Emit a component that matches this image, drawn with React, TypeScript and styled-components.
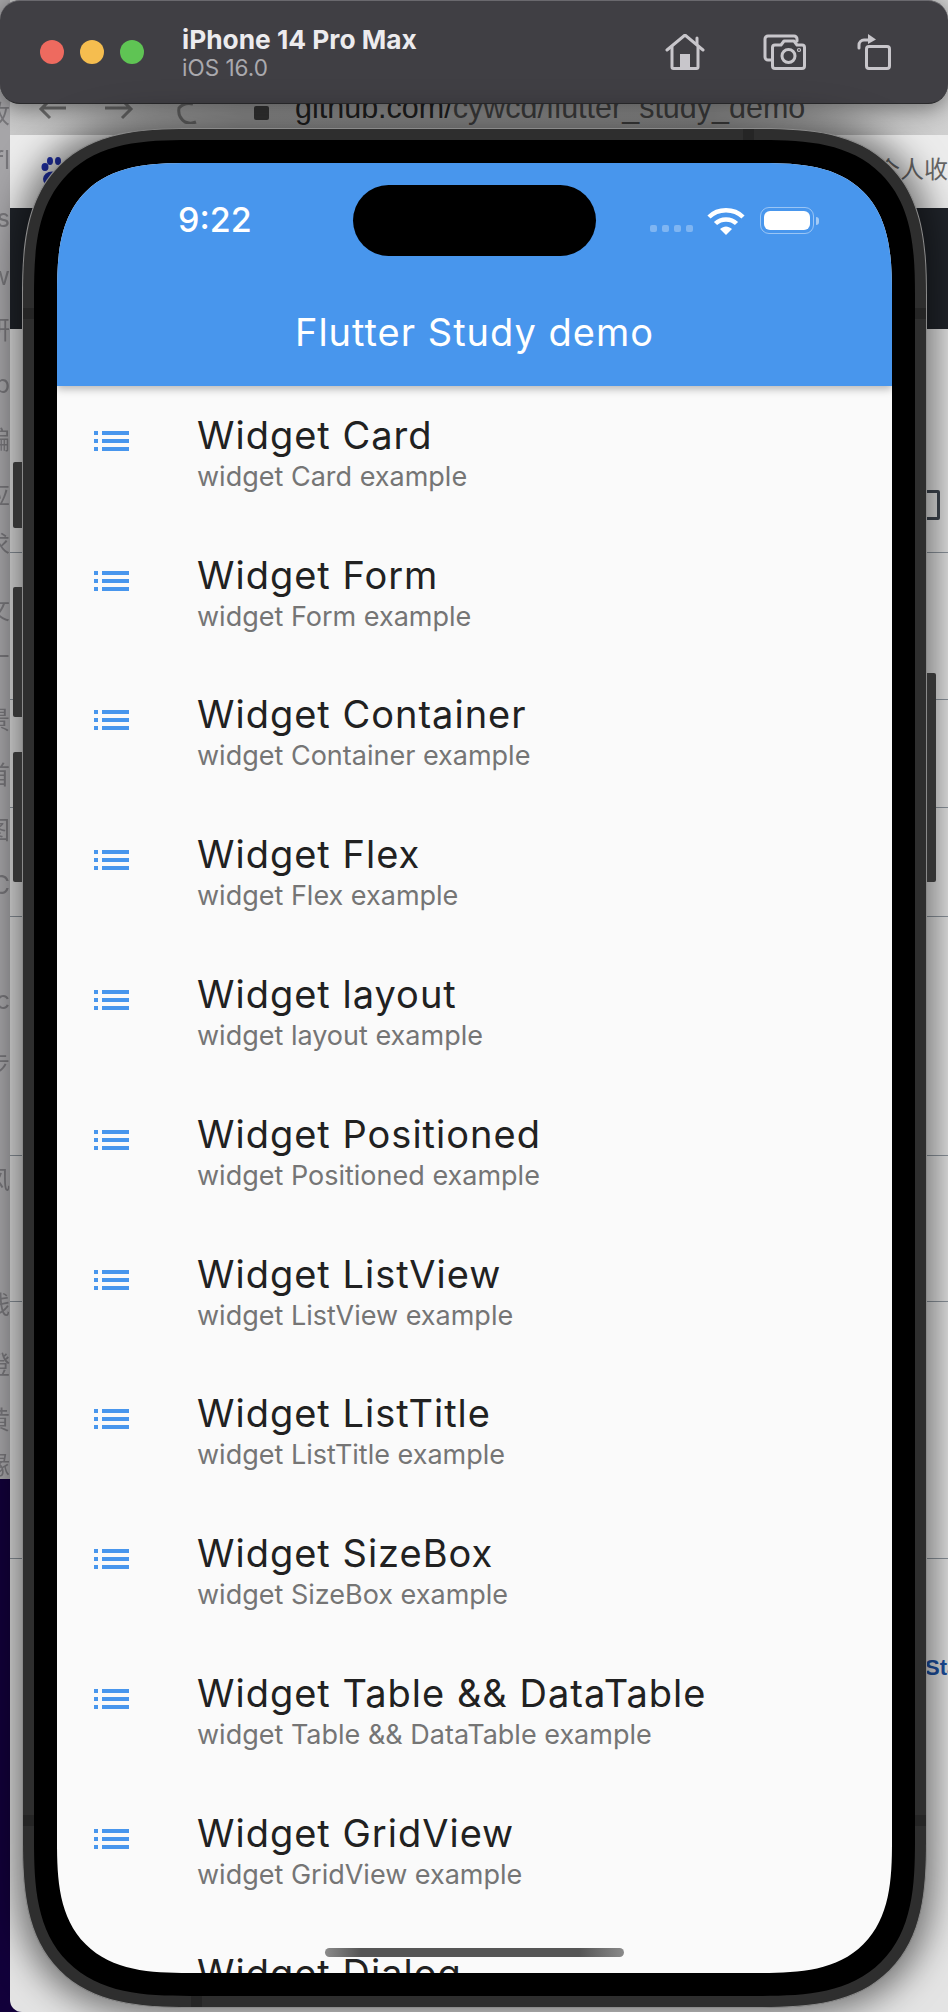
import React from 'react';
import styled, { createGlobalStyle } from 'styled-components';

const GlobalStyle = createGlobalStyle`
  html, body {
    margin: 0;
    padding: 0;
    background: #12003a;
    font-family: Inter, "Noto Sans CJK SC", sans-serif;
  }
`;

const Page = styled.div`
  position: relative;
  width: 948px;
  height: 2012px;
  overflow: hidden;
  background: linear-gradient(#a6a5a8 0, #a6a5a8 1479px, #12003a 1479px);
`;

/* blurred browser window behind the simulator */
const BrowserWindow = styled.div`
  position: absolute;
  top: 0;
  left: 10px;
  right: 0;
  bottom: 0;
  border-radius: 0 0 0 12px;
  overflow: hidden;
  background: #e4e4e4;
`;

const UrlBar = styled.div`
  height: 135px;
  display: flex;
  align-items: flex-start;
  padding-top: 92px;
  box-sizing: border-box;
  background: linear-gradient(90deg, #c8c8c8, #a0a0a0 25%, #9c9c9c 75%, #d0d0d0);
`;

const UrlText = styled.span`
  margin-left: 285px;
  font-family: "Liberation Sans", sans-serif;
  font-size: 30.5px;
  line-height: 30px;
  color: #222;
  white-space: nowrap;

  b {
    font-weight: 400;
    color: #444;
  }
`;

const BookmarkBar = styled.div`
  height: 73px;
  display: flex;
  justify-content: flex-end;
  align-items: center;
  background: #ececec;
  padding-bottom: 8px;
  box-sizing: border-box;
`;

const BookmarkText = styled.span`
  font-size: 24px;
  color: #666;
  white-space: nowrap;
  margin-right: -24px;
`;

const DarkBand = styled.div`
  height: 121px;
  background: #20242a;
`;

const Divider = styled.div<{ $top: number }>`
  position: absolute;
  top: ${({ $top }) => $top}px;
  left: 0;
  right: 0;
  height: 1px;
  background: #8c949c;
`;

const SideChar = styled.span<{ $top: number }>`
  position: absolute;
  top: ${({ $top }) => $top}px;
  left: -16px;
  width: 26px;
  height: 28px;
  overflow: hidden;
  font-size: 25px;
  line-height: 28px;
  text-align: right;
  color: #77767a;
  filter: blur(0.4px);
`;

const RightEdgeIcon = styled.div`
  position: absolute;
  top: 490px;
  right: 8px;
  width: 28px;
  height: 30px;
  box-sizing: border-box;
  border: 3px solid #3f4650;
  border-radius: 2px;
`;

const RightEdgeLink = styled.span`
  position: absolute;
  top: 1655px;
  left: 915px;
  font-family: "Liberation Sans", sans-serif;
  font-size: 22px;
  font-weight: 700;
  color: #1c4fa0;
`;

const BrowserNav = styled.svg`
  position: absolute;
  top: 104px;
  left: 36px;
`;

const Paw = styled.svg`
  position: absolute;
  top: 157px;
  left: 39px;
`;

/* simulator title bar */
const Toolbar = styled.header`
  position: relative;
  height: 104px;
  box-sizing: border-box;
  display: flex;
  align-items: center;
  padding: 0 57px 0 40px;
  background: #403f44;
  border-top: 1px solid #6a696e;
  border-bottom: 1px solid #2a2a2c;
  border-radius: 20px;
  box-shadow: 0 4px 22px rgba(0, 0, 0, 0.45);
`;

const Lights = styled.div`
  display: flex;
  gap: 16px;
`;

const Light = styled.span<{ $color: string }>`
  width: 24px;
  height: 24px;
  border-radius: 50%;
  background: ${({ $color }) => $color};
`;

const DeviceInfo = styled.div`
  margin-left: 38px;
  padding-top: 2px;
  display: flex;
  flex-direction: column;
  flex: 1;
`;

const DeviceName = styled.span`
  font-size: 26.3px;
  line-height: 30px;
  font-weight: 700;
  color: #ecebee;
`;

const DeviceOs = styled.span`
  font-size: 22.5px;
  line-height: 26px;
  color: #aaa9ae;
`;

const ToolIcons = styled.div`
  display: flex;
  align-items: center;
  gap: 51px;
`;

const ToolIcon = styled.svg`
  display: block;
  fill: none;
  stroke: #c8c6cb;
  stroke-width: 3;
  stroke-linecap: round;
  stroke-linejoin: round;

  &:first-child {
    margin-right: 7px;
  }
`;

/* phone */
const Phone = styled.div`
  position: relative;
  width: 905px;
  height: 1880px;
  margin: 24px 0 0 22px;
  box-sizing: border-box;
  padding: 11px;
  background: #2e2e2e;
  border: 1px solid #8a8a8a;
  border-radius: 170px;
  corner-shape: superellipse(1.5);
  box-shadow: 0 0 34px 8px rgba(0, 0, 0, 0.5);
`;

const SideButton = styled.span<{ $top: number; $height: number; $right?: boolean }>`
  position: absolute;
  top: ${({ $top }) => $top}px;
  ${({ $right }) => ($right ? 'right: -10px;' : 'left: -10px;')}
  width: 9px;
  height: ${({ $height }) => $height}px;
  background: #343434;
  border-radius: ${({ $right }) => ($right ? '0 2px 2px 0' : '2px 0 0 2px')};
`;

const Antenna = styled.span<{ $css: string }>`
  position: absolute;
  background: #252525;
  ${({ $css }) => $css}
`;

const Bezel = styled.div`
  position: relative;
  height: 100%;
  box-sizing: border-box;
  padding: 23px;
  background: #000;
  border-radius: 156px;
  corner-shape: superellipse(1.5);
`;

const Screen = styled.div`
  position: relative;
  height: 100%;
  display: flex;
  flex-direction: column;
  overflow: hidden;
  background: #fafafa;
  border-radius: 132px;
  corner-shape: superellipse(1.5);
`;

const AppBar = styled.div`
  position: relative;
  height: 223px;
  flex-shrink: 0;
  background: #4896ed;
  color: #fff;
  box-shadow: 0 3px 8px rgba(0, 0, 0, 0.28);
`;

const StatusBar = styled.div`
  height: 110px;
  box-sizing: border-box;
  display: flex;
  align-items: flex-start;
  padding-top: 22px;
`;

const Time = styled.span`
  width: 296px;
  padding-left: 121px;
  box-sizing: border-box;
  font-size: 34px;
  line-height: 70px;
  font-weight: 500;
`;

const Island = styled.div`
  width: 243px;
  height: 71px;
  border-radius: 36px;
  background: #000;
`;

const StatusIcons = styled.div`
  display: flex;
  align-items: center;
  height: 71px;
  margin-left: 54px;
`;

const Dots = styled.div`
  display: flex;
  gap: 5px;
  margin: 15px 14px 0 0;
`;

const Dot = styled.span`
  width: 7px;
  height: 7px;
  border-radius: 2px;
  background: rgba(255, 255, 255, 0.3);
`;

const Battery = styled.div`
  display: flex;
  align-items: center;
  margin-left: 15px;
`;

const BatteryBody = styled.div`
  width: 54px;
  height: 27px;
  box-sizing: border-box;
  padding: 3px;
  border: 1.5px solid rgba(255, 255, 255, 0.45);
  border-radius: 9px;
`;

const BatteryFill = styled.div`
  height: 100%;
  border-radius: 6px;
  background: #fff;
`;

const BatteryNub = styled.span`
  width: 3px;
  height: 8px;
  margin-left: 2px;
  border-radius: 0 3px 3px 0;
  background: rgba(255, 255, 255, 0.5);
`;

const AppTitle = styled.div`
  text-align: center;
  font-size: 38px;
  line-height: 44px;
  letter-spacing: 1px;
  margin-top: 37px;
`;

const List = styled.div`
  flex: 1;
  overflow: hidden;
`;

const Row = styled.div`
  height: 139.8px;
  display: grid;
  grid-template-columns: 35px 1fr;
  column-gap: 68px;
  align-items: center;
  padding-left: 37px;
  box-sizing: border-box;
`;

const RowIcon = styled.svg`
  display: block;
  margin-top: -30px;
  fill: #4896ed;
`;

const RowText = styled.div`
  display: flex;
  flex-direction: column;
`;

const RowTitle = styled.span`
  font-size: 38px;
  line-height: 41px;
  letter-spacing: 1px;
  color: #212121;
`;

const RowSubtitle = styled.span`
  font-size: 27px;
  line-height: 41px;
  color: #757575;
`;

const HomeIndicator = styled.div`
  position: absolute;
  left: 268px;
  bottom: 16px;
  width: 299px;
  height: 9px;
  border-radius: 5px;
  background: linear-gradient(90deg, #8a8a8a, #555 12%, #555 85%, #8a8a8a);
`;

const sideChars: [string, number][] = [
  ['收', 100], ['fl', 146], ['s', 204], ['w', 262], ['研', 316], ['p', 370], ['编', 426], ['应', 481], ['求', 531],
  ['文', 596], ['丁', 651], ['景', 706], ['首', 761], ['图', 816], ['C', 871], ['ic', 986], ['步', 1051],
  ['风', 1166], ['线', 1291], ['橙', 1351], ['黄', 1406], ['缘', 1451],
];

const rightLines = [552, 699, 807, 916, 1155, 1301, 1558];

const widgets = [
  'Card', 'Form', 'Container', 'Flex', 'layout', 'Positioned', 'ListView', 'ListTitle', 'SizeBox',
  'Table && DataTable', 'GridView', 'Dialog',
];

const ListIcon = () => (
  <RowIcon width="35" height="20" viewBox="0 0 35 20">
    <rect x="0" y="0" width="4" height="4" />
    <rect x="0" y="8" width="4" height="4" />
    <rect x="0" y="16" width="4" height="4" />
    <rect x="8" y="0" width="27" height="4" />
    <rect x="8" y="8" width="27" height="4" />
    <rect x="8" y="16" width="27" height="4" />
  </RowIcon>
);

const App: React.FC = (): JSX.Element => (
  <Page>
    <GlobalStyle />
    <BrowserWindow>
      <UrlBar>
        <UrlText>
          github.com/<b>cywcd/flutter_study_demo</b>
        </UrlText>
      </UrlBar>
      <BookmarkBar>
        <BookmarkText>个人收藏</BookmarkText>
      </BookmarkBar>
      <DarkBand />
      {rightLines.map((top) => (
        <Divider key={top} $top={top} />
      ))}
      <RightEdgeIcon />
      <RightEdgeLink>Sta</RightEdgeLink>
    </BrowserWindow>
    {sideChars.map(([char, top]) => (
      <SideChar key={char} $top={top}>
        {char}
      </SideChar>
    ))}
    <BrowserNav width="240" height="20" viewBox="0 0 240 20" fill="none" stroke="#6d6d6d" strokeWidth="3">
      <path d="M30 4H6M14 -4L5 5L14 14" />
      <path d="M69 4H94M86 -4L95 5L86 14" />
      <path d="M157 0a14 14 0 0 0 -14 4a14 14 0 0 0 6 14a14 14 0 0 0 11 0" />
      <rect x="218" y="2" width="15" height="14" rx="2" fill="#3a3a3a" stroke="none" />
    </BrowserNav>
    <Paw width="28" height="30" viewBox="0 0 28 30" fill="#1f2fa8">
      <ellipse cx="6" cy="10" rx="3.5" ry="4" />
      <ellipse cx="11" cy="4" rx="3" ry="4" />
      <ellipse cx="19" cy="4" rx="3" ry="4" />
      <ellipse cx="13" cy="22" rx="9" ry="7.5" />
    </Paw>

    <Toolbar>
      <Lights>
        <Light $color="#ee6a5f" />
        <Light $color="#f5bd4f" />
        <Light $color="#5fc454" />
      </Lights>
      <DeviceInfo>
        <DeviceName>iPhone 14 Pro Max</DeviceName>
        <DeviceOs>iOS 16.0</DeviceOs>
      </DeviceInfo>
      <ToolIcons>
        <ToolIcon width="40" height="36" viewBox="0 0 40 36">
          <path d="M2 16L20 1L38 16" />
          <path d="M7 13V33a1.5 1.5 0 0 0 1.5 1.5H31.5a1.5 1.5 0 0 0 1.5 -1.5V13" />
          <path d="M32 10V4" />
          <rect x="15" y="20" width="10" height="14" fill="#c8c6cb" stroke="none" />
        </ToolIcon>
        <ToolIcon width="43" height="36" viewBox="0 0 43 36">
          <path d="M8 26H5a3 3 0 0 1 -3 -3V5a3 3 0 0 1 3 -3H31a3 3 0 0 1 3 3V7" />
          <path d="M12 11h6l3-4h10l3 4h5a2.5 2.5 0 0 1 2.5 2.5V32a2.5 2.5 0 0 1 -2.5 2.5H12a2.5 2.5 0 0 1 -2.5 -2.5V13.5A2.5 2.5 0 0 1 12 11z" />
          <circle cx="25.5" cy="22" r="6.5" />
          <circle cx="36" cy="16" r="0.6" />
        </ToolIcon>
        <ToolIcon width="34" height="38" viewBox="0 0 34 38">
          <rect x="9.5" y="13.5" width="23" height="22" rx="2.5" />
          <path d="M2 15V12a5 5 0 0 1 5 -5H12" />
          <path d="M11 1L19 6.5L11 11z" fill="#c8c6cb" stroke="none" />
        </ToolIcon>
      </ToolIcons>
    </Toolbar>

    <Phone>
      <SideButton $top={333} $height={66} />
      <SideButton $top={458} $height={130} />
      <SideButton $top={623} $height={130} />
      <SideButton $right $top={544} $height={209} />
      <Antenna $css="top: 0; left: 720px; width: 11px; height: 11px;" />
      <Antenna $css="bottom: 0; left: 168px; width: 11px; height: 11px;" />
      <Antenna $css="left: 0; top: 179px; width: 11px; height: 11px;" />
      <Antenna $css="right: 0; top: 179px; width: 11px; height: 11px;" />
      <Antenna $css="left: 0; top: 1686px; width: 11px; height: 11px;" />
      <Antenna $css="right: 0; top: 1686px; width: 11px; height: 11px;" />
      <Bezel>
        <Screen>
          <AppBar>
            <StatusBar>
              <Time>9:22</Time>
              <Island />
              <StatusIcons>
                <Dots>
                  <Dot />
                  <Dot />
                  <Dot />
                  <Dot />
                </Dots>
                <svg width="38" height="28" viewBox="0 0 38 28" fill="none" stroke="#fff" strokeWidth="4.5">
                  <path d="M2 10C11 1 27 1 36 10" />
                  <path d="M8.5 16.5C14 11 24 11 29.5 16.5" />
                  <path d="M13 22L19 28L25 22C21 18.5 17 18.5 13 22z" fill="#fff" stroke="none" />
                </svg>
                <Battery>
                  <BatteryBody>
                    <BatteryFill />
                  </BatteryBody>
                  <BatteryNub />
                </Battery>
              </StatusIcons>
            </StatusBar>
            <AppTitle>Flutter Study demo</AppTitle>
          </AppBar>
          <List>
            {widgets.map((name) => (
              <Row key={name}>
                <ListIcon />
                <RowText>
                  <RowTitle>Widget {name}</RowTitle>
                  <RowSubtitle>widget {name} example</RowSubtitle>
                </RowText>
              </Row>
            ))}
          </List>
          <HomeIndicator />
        </Screen>
      </Bezel>
    </Phone>
  </Page>
);

export default App;
